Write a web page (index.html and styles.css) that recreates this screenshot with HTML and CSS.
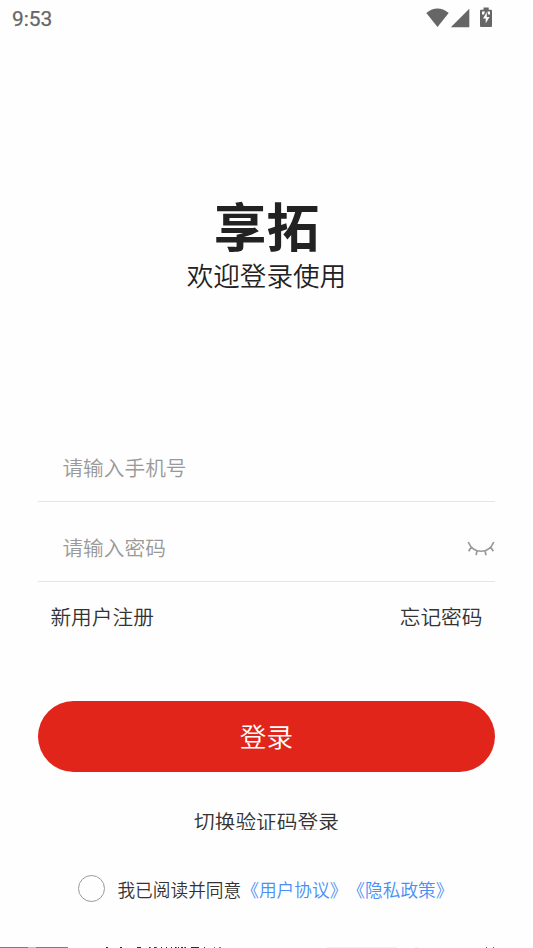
FILE: index.html
```
<!DOCTYPE html>
<html lang="zh-CN">
<head>
<meta charset="utf-8">
<title>享拓</title>
<link rel="stylesheet" href="styles.css">
</head>
<body>
<div class="screen">
  <header class="status">
    <span class="time">9:53</span>
    <svg class="status-icons" width="67" height="22" viewBox="0 0 67 22" fill="#666">
      <path d="M.3 5Q11.500-3.800 22.700 5L11.500 19Z"/>
      <path d="M43.300 .8V19.300H24.800Z"/>
      <path d="M55 1.700h2.500V-.5h5.200v2.200H65q1 0 1 1V18q0 1-1 1H55q-1 0-1-1V2.700q0-1 1-1Z"/>
      <path fill="#fff" d="M56 3.500h3l-1 3h-2ZM61.500 3.500H64v3h-2ZM60.800 4v5h2.800l-3.900 6.300v-4.700H57Z"/>
    </svg>
  </header>
  <main class="login">
    <h1 class="brand">享拓</h1>
    <p class="welcome">欢迎登录使用</p>
    <div class="field">请输入手机号</div>
    <div class="field">
      <span>请输入密码</span>
      <svg class="eye" width="28" height="16" viewBox="0 0 28 16" fill="none" stroke="#999" stroke-width="1.700">
        <path d="M1.200 2C6.500 14.300 21.500 14.300 26.800 2M4.300 7L1.700 11.300M10 10.500L9.200 15.200M18 10.500L19 15.200M23.700 7L26.300 11.300"/>
      </svg>
    </div>
    <nav class="links"><span>新用户注册</span><span>忘记密码</span></nav>
    <button class="submit" type="button">登录</button>
    <div class="switch">切换验证码登录</div>
    <div class="agreement">
      <span class="radio"></span>
      <span class="consent">我已阅读并同意<a>《用户协议》</a><a>《隐私政策》</a></span>
    </div>
  </main>
  <footer class="edge">
    <svg width="533" height="1" viewBox="0 0 533 1" shape-rendering="crispEdges">
      <path fill="#8066e8" d="M0 0h68v1H0z"/>
      <path fill="#c5b8ed" d="M28 0h8v1h-8z"/>
      <path fill="#302a3c" d="M106 0h2v1h-2zM120 0h2v1h-2zM137 0h4v1h-4zM149 0h1v1h-1zM154 0h2v1h-2zM161 0h1v1h-1zM166 0h1v1h-1zM171 0h1v1h-1zM175 0h1v1h-1zM178 0h1v1h-1zM181 0h2v1h-2zM185 0h1v1h-1zM191 0h8v1h-8zM204 0h1v1h-1z"/>
      <path fill="#657ca5" d="M150 0h1v1h-1zM156 0h1v1h-1zM176 0h1v1h-1zM184 0h1v1h-1zM214 0h1v1h-1zM219 0h2v1h-2z"/>
      <path fill="#f0f0f0" d="M327 0h70v1h-70zM415 0h3v1h-3z"/>
      <path fill="#666" d="M486 0h1v1h-1zM493 0h1v1h-1z"/>
    </svg>
  </footer>
</div>
</body>
</html>
```
FILE: styles.css
```
* { box-sizing: border-box; }
body {
  margin: 0;
  background: #fefefe;
  color: #333;
  font-family: "Noto Sans CJK SC", sans-serif;
  font-weight: 350;
}
.screen {
  display: flex;
  flex-direction: column;
  height: 948px;
  overflow: hidden;
}
.status {
  display: flex;
  justify-content: space-between;
  height: 38px;
  padding: 8px 40px 0 12px;
}
.time {
  color: #666;
  font: 400 20.900px/22px Roboto, sans-serif;
  -webkit-text-stroke: .25px #666;
}
.status-icons { overflow: visible; }
.login {
  flex: 1;
  padding: 155px 38.500px 0 38.400px;
}
.brand {
  margin: 0;
  color: #222;
  font-size: 52.700px;
  line-height: 62px;
  text-align: center;
}
.welcome {
  margin: 1px 0 140px;
  color: #222;
  font-size: 26.600px;
  line-height: 37px;
  text-align: center;
}
.field {
  display: flex;
  align-items: center;
  justify-content: space-between;
  height: 69px;
  padding-left: 24px;
  border-bottom: 1px solid #e6e6e6;
  color: #999;
  font-size: 20.700px;
}
.field + .field { height: 80px; padding-top: 11px; }
.eye { display: block; margin-top: 2px; }
.links {
  display: flex;
  justify-content: space-between;
  margin-top: 19px;
  padding: 0 12px;
  font-size: 20.700px;
  line-height: 30px;
}
.submit {
  display: block;
  width: 100%;
  height: 71px;
  margin-top: 70px;
  padding: 0 0 2px;
  border: 0;
  border-radius: 36px;
  background: #e1251b;
  color: #fff;
  font: 350 26.600px/69px "Noto Sans CJK SC", sans-serif;
}
.switch {
  height: 23px;
  margin-top: 35px;
  overflow: hidden;
  font-size: 20.700px;
  line-height: 28px;
  text-align: center;
}
.agreement {
  display: flex;
  align-items: center;
  height: 28px;
  margin: 45px 0 0 40px;
}
.radio {
  width: 27px;
  height: 27px;
  margin: 0 12px 2px 0;
  border: 1px solid #999;
  border-radius: 50%;
}
.consent {
  font-size: 17.700px;
  line-height: 28px;
  white-space: nowrap;
  text-spacing-trim: space-all;
  font-kerning: none;
}
.consent a { color: #498ff5; }
.edge { height: 1px; line-height: 0; }
.edge svg { display: block; }
```
